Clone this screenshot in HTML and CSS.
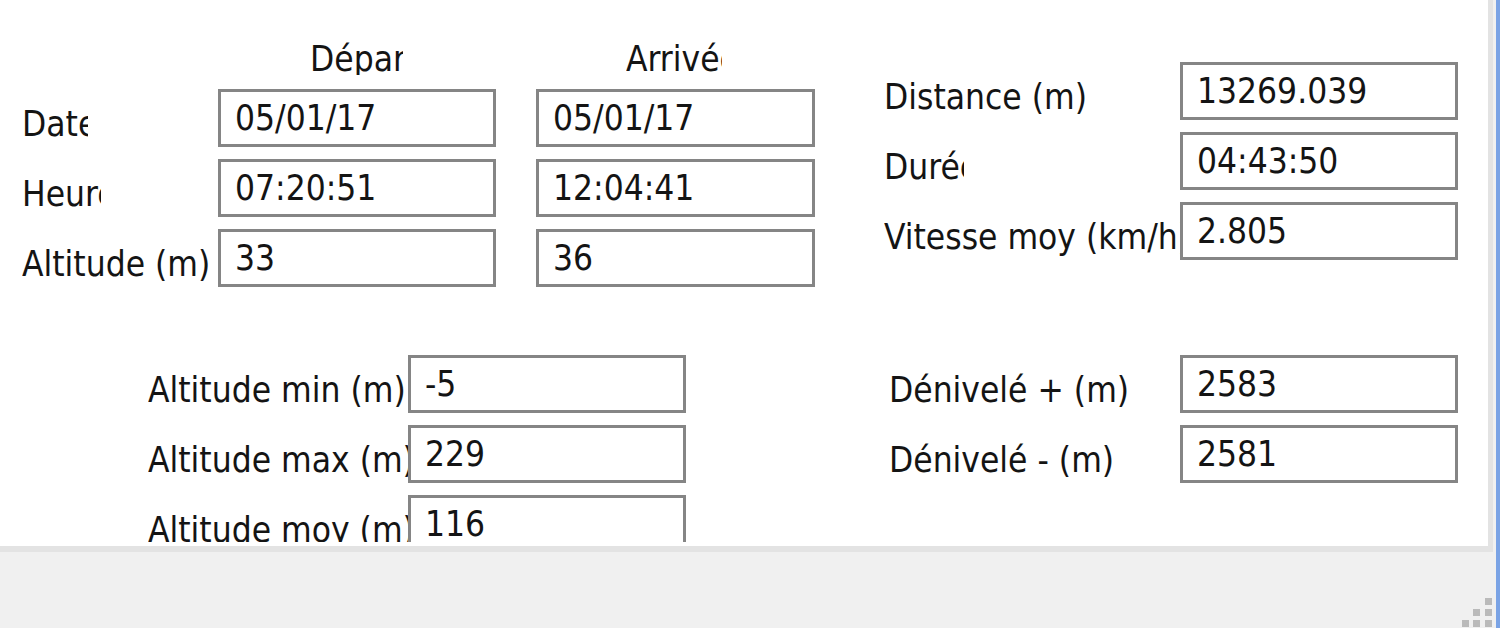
FILE: index.html
```html
<!DOCTYPE html>
<html lang="fr">

<head>
    <meta charset="UTF-8">
    <meta name="viewport" content="width=device-width, initial-scale=1.0">
    <title>Statistiques de la trace</title>
    <link rel="stylesheet" href="styles.css">
</head>

<body>
    <div class="window">
        <div class="client">
            <div class="panel">
                <div class="scroll">
                    <div class="top">
                        <div class="trip">
                            <div class="heads">
                                <span class="head head-dep">Départ</span>
                                <span class="head head-arr">Arrivée</span>
                            </div>
                            <div class="row">
                                <span class="lbl lbl-trip"><span class="cut cut-date">Date</span></span>
                                <input class="field" type="text" value="05/01/17" readonly>
                                <input class="field field-arr" type="text" value="05/01/17" readonly>
                            </div>
                            <div class="row">
                                <span class="lbl lbl-trip"><span class="cut cut-hour">Heure</span></span>
                                <input class="field" type="text" value="07:20:51" readonly>
                                <input class="field field-arr" type="text" value="12:04:41" readonly>
                            </div>
                            <div class="row">
                                <span class="lbl lbl-trip"><span class="cut">Altitude (m)</span></span>
                                <input class="field" type="text" value="33" readonly>
                                <input class="field field-arr" type="text" value="36" readonly>
                            </div>
                        </div>

                        <div class="stats">
                            <div class="row">
                                <span class="lbl lbl-stats"><span class="cut">Distance (m)</span></span>
                                <input class="field" type="text" value="13269.039" readonly>
                            </div>
                            <div class="row">
                                <span class="lbl lbl-stats"><span class="cut cut-dur">Durée</span></span>
                                <input class="field" type="text" value="04:43:50" readonly>
                            </div>
                            <div class="row">
                                <span class="lbl lbl-stats"><span class="cut">Vitesse moy (km/h)</span></span>
                                <input class="field" type="text" value="2.805" readonly>
                            </div>
                        </div>
                    </div>

                    <div class="bottom">
                        <div class="alti">
                            <div class="row">
                                <span class="lbl lbl-alti"><span class="cut">Altitude min (m)</span></span>
                                <input class="field" type="text" value="-5" readonly>
                            </div>
                            <div class="row">
                                <span class="lbl lbl-alti"><span class="cut">Altitude max (m)</span></span>
                                <input class="field" type="text" value="229" readonly>
                            </div>
                            <div class="row">
                                <span class="lbl lbl-alti"><span class="cut">Altitude moy (m)</span></span>
                                <input class="field" type="text" value="116" readonly>
                            </div>
                        </div>

                        <div class="elev">
                            <div class="row">
                                <span class="lbl lbl-elev"><span class="cut">Dénivelé + (m)</span></span>
                                <input class="field" type="text" value="2583" readonly>
                            </div>
                            <div class="row">
                                <span class="lbl lbl-elev"><span class="cut">Dénivelé - (m)</span></span>
                                <input class="field" type="text" value="2581" readonly>
                            </div>
                        </div>
                    </div>
                </div>
            </div>

            <div class="status">
                <svg class="grip" width="30" height="29" viewBox="0 0 30 29">
                    <rect x="23" y="0" width="7" height="7" />
                    <rect x="11" y="11" width="7" height="7" />
                    <rect x="23" y="11" width="7" height="7" />
                    <rect x="0" y="22" width="7" height="7" />
                    <rect x="11" y="22" width="7" height="7" />
                    <rect x="23" y="22" width="7" height="7" />
                </svg>
            </div>
        </div>
        <div class="frame-edge"></div>
    </div>
</body>

</html>
```

FILE: styles.css
```css
body {
    margin: 0;
    background: #f0f0f0;
    color: #141414;
    font-family: "DejaVu Sans Condensed", "DejaVu Sans", sans-serif;
    font-stretch: condensed;
    font-size: 35px;
}

.window {
    display: flex;
    width: 1500px;
    height: 628px;
    overflow: hidden;
}

.client {
    flex: 1;
    display: flex;
    flex-direction: column;
}

.frame-edge {
    width: 4px;
    background: #7aa3e5;
}

.panel {
    height: 546px;
    margin-right: 3px;
    background: white;
    border-right: 5px solid #e3e3e3;
    border-bottom: 6px solid #e3e3e3;
    overflow: hidden;
}

.scroll {
    height: 542px;
    overflow: hidden;
}

.top {
    display: flex;
    padding-top: 39px;
}

.trip {
    margin-left: 22px;
}

.heads {
    display: flex;
    height: 50px;
    padding-left: 288px;
}

/* static labels keep their fixed size, text is clipped like the original dialog */
.head {
    display: block;
    width: 93px;
    height: 36px;
    line-height: 41px;
    overflow: hidden;
    white-space: nowrap;
}

.head-arr {
    margin-left: 223px;
    width: 96px;
}

.row {
    display: flex;
    height: 58px;
}

.row + .row {
    margin-top: 12px;
}

.lbl {
    flex: none;
    padding-top: 15px;
    line-height: 41px;
    overflow: hidden;
    white-space: nowrap;
}

.cut {
    display: block;
    overflow: hidden;
    white-space: nowrap;
}

.cut-date {
    width: 66px;
}

.cut-hour {
    width: 79px;
}

.cut-dur {
    width: 80px;
}

.lbl-trip {
    width: 196px;
}

.stats {
    margin-left: 69px;
    margin-top: 23px;
}

.lbl-stats {
    width: 296px;
}

.bottom {
    display: flex;
    margin-top: 68px;
}

.alti {
    margin-left: 148px;
}

.lbl-alti {
    width: 260px;
}

.elev {
    margin-left: 203px;
}

.lbl-elev {
    width: 291px;
}

.field {
    flex: none;
    box-sizing: border-box;
    width: 278px;
    height: 58px;
    margin: 0;
    padding: 0 14px;
    border: 3px solid #858585;
    background: white;
    color: inherit;
    font: inherit;
    outline: none;
}

.field-arr {
    width: 279px;
    margin-left: 40px;
}

.status {
    flex: 1;
    position: relative;
}

.grip {
    position: absolute;
    right: 4px;
    bottom: 1px;
    fill: #bababa;
}
```
